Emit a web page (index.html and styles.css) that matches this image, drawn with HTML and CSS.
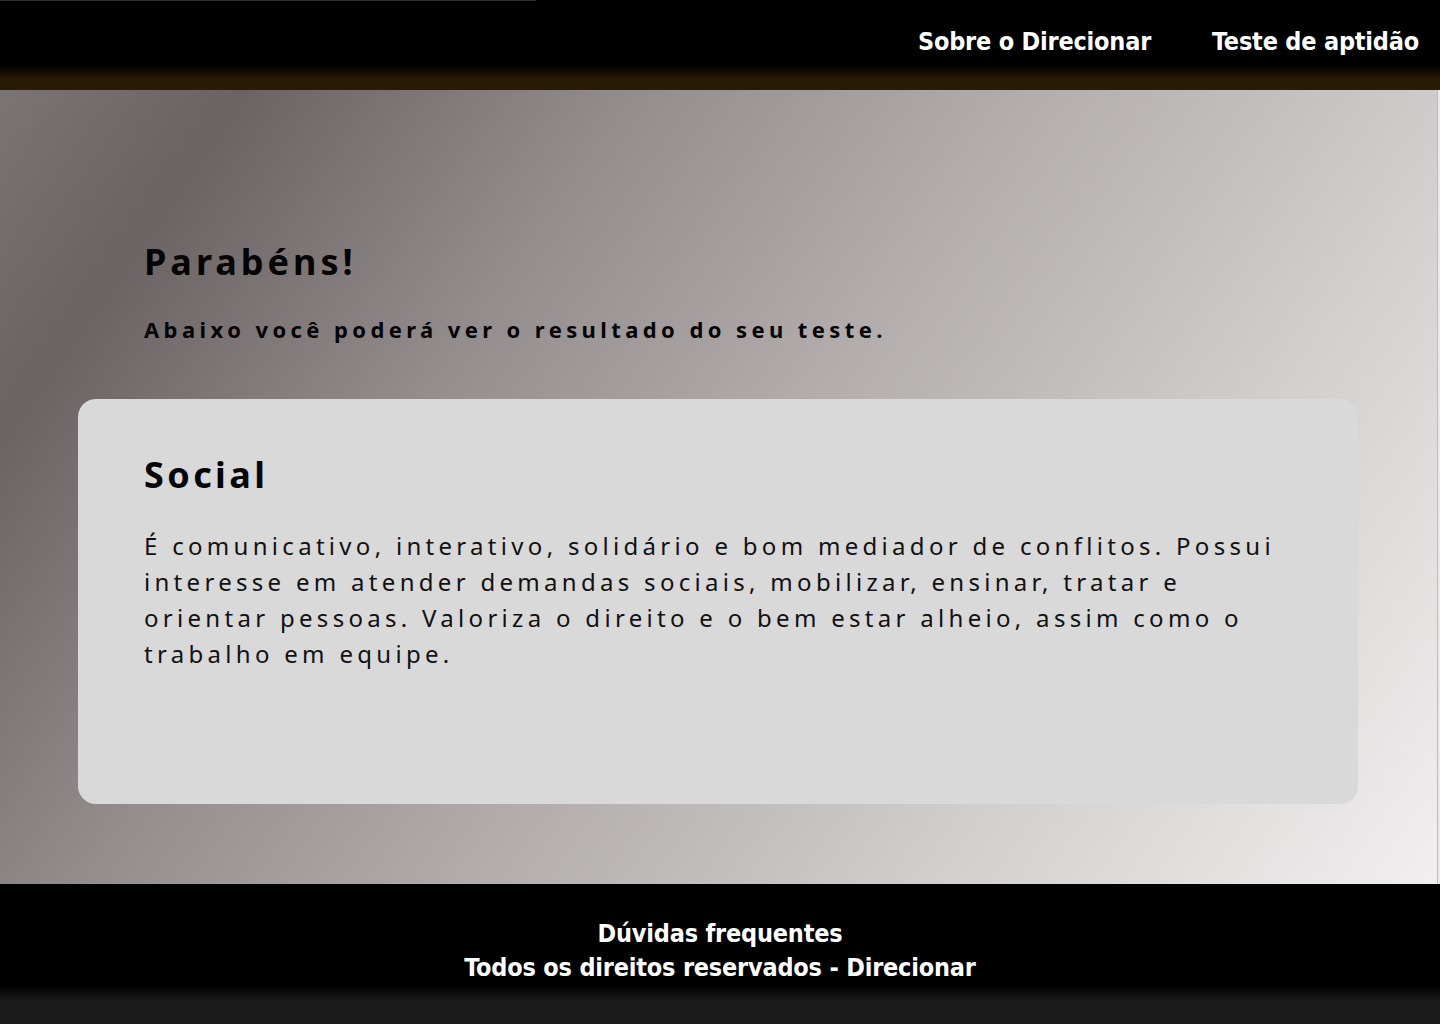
FILE: index.html
```html
<!DOCTYPE html>
<html lang="pt-BR">
<head>
<meta charset="utf-8">
<title>Direcionar - Resultado</title>
<link rel="stylesheet" href="styles.css">
</head>
<body>
<header class="topbar">
  <div class="topline"></div>
  <nav class="nav">
    <a class="nav-link" href="#">Sobre o Direcionar</a>
    <a class="nav-link" href="#">Teste de aptidão</a>
  </nav>
</header>
<main class="main">
  <section class="intro">
    <h1 class="title">Parabéns!</h1>
    <p class="subtitle">Abaixo você poderá ver o resultado do seu teste.</p>
  </section>
  <section class="card">
    <h2 class="card-title">Social</h2>
    <p class="card-text">É comunicativo, interativo, solidário e bom mediador de conflitos. Possui interesse em atender demandas sociais, mobilizar, ensinar, tratar e orientar pessoas. Valoriza o direito e o bem estar alheio, assim como o trabalho em equipe.</p>
  </section>
</main>
<footer class="footer">
  <p class="footer-line">Dúvidas frequentes</p>
  <p class="footer-line">Todos os direitos reservados - Direcionar</p>
</footer>
</body>
</html>
```
FILE: styles.css
```css
* { box-sizing: border-box; }
html, body { margin: 0; padding: 0; }
body {
  width: 1440px;
  height: 1024px;
  overflow: hidden;
  font-family: "Noto Sans", "Open Sans", sans-serif;
  display: flex;
  flex-direction: column;
}
.topbar {
  height: 90px;
  flex: none;
  position: relative;
  background: linear-gradient(to bottom, #000 0%, #000 72%, #281a03 88%, #2a1b03 100%);
  display: flex;
  justify-content: flex-end;
  align-items: flex-start;
}
.topline {
  position: absolute;
  left: 0;
  top: 0;
  width: 536px;
  height: 1px;
  background: #303030;
}
.nav {
  display: flex;
  gap: 61px;
  padding: 26px 21px 0 0;
}
.nav-link {
  color: #fff;
  text-decoration: none;
  font-family: "DejaVu Sans Condensed", "DejaVu Sans", sans-serif;
  font-weight: bold;
  font-size: 25px;
  line-height: 32px;
  letter-spacing: -0.2px;
}
.main {
  flex: 1;
  background: linear-gradient(125deg, #7b7474 0%, #6b6363 12%, #948d8d 32%, #b3adad 52%, #d3cfcf 75%, #f1efef 100%);
  padding: 150px 80px 0 78px;
  border-right: 2px solid #ebe9e9;
  box-shadow: inset -1px 0 0 #bdbcbc;
}
.intro {
  padding-left: 66px;
}
.title {
  margin: 0;
  font-size: 36px;
  line-height: 44px;
  font-weight: bold;
  letter-spacing: 4px;
  color: #050505;
}
.subtitle {
  margin: 30px 0 0;
  font-size: 22px;
  line-height: 30px;
  font-weight: bold;
  letter-spacing: 4.4px;
  color: #050505;
}
.card {
  margin-top: 55px;
  width: 1280px;
  height: 405px;
  background: #d9d9d9;
  border-radius: 18px;
  padding: 54px 66px 0 66px;
}
.card-title {
  margin: 0;
  font-size: 36px;
  line-height: 44px;
  font-weight: bold;
  letter-spacing: 3.4px;
  color: #050505;
}
.card-text {
  margin: 31px 0 0;
  font-size: 24px;
  line-height: 36px;
  font-weight: normal;
  letter-spacing: 4.3px;
  color: #111;
}
.footer {
  height: 140px;
  flex: none;
  background: linear-gradient(to bottom, #000 0%, #000 72%, #1a1a1a 84%, #1b1b1b 100%);
  padding-top: 33px;
  text-align: center;
}
.footer-line {
  margin: 0;
  color: #fff;
  font-family: "DejaVu Sans Condensed", "DejaVu Sans", sans-serif;
  font-weight: bold;
  font-size: 25px;
  line-height: 34px;
  letter-spacing: -0.2px;
}
```
